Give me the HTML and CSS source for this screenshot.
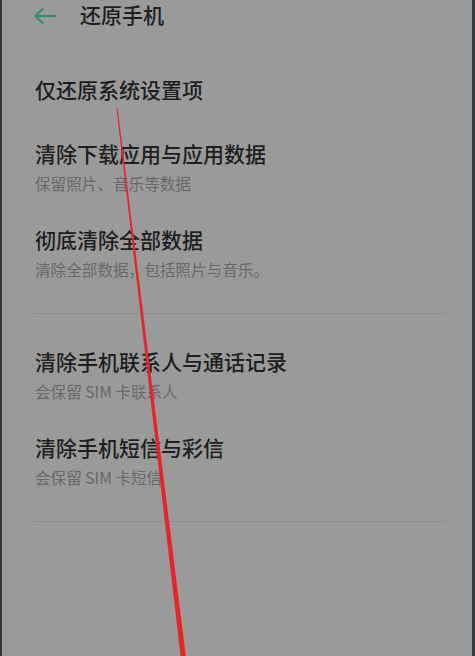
FILE: index.html
```html
<!DOCTYPE html>
<html lang="zh-CN">
<head>
<meta charset="utf-8">
<title>还原手机</title>
<link rel="stylesheet" href="styles.css">
</head>
<body>
<div class="screen">
  <header class="topbar">
    <svg class="back" width="24" height="18" viewBox="0 0 24 18" aria-hidden="true">
      <path d="M22 9H2.5M9.5 2L2.5 9l7 7" fill="none" stroke="#3f8c6c" stroke-width="2.2" stroke-linecap="round" stroke-linejoin="round"/>
    </svg>
    <h1 class="title">还原手机</h1>
  </header>

  <section class="group first-group">
    <div class="item single">
      <div class="item-title">仅还原系统设置项</div>
    </div>
    <div class="item">
      <div class="item-title">清除下载应用与应用数据</div>
      <div class="item-sub">保留照片、音乐等数据</div>
    </div>
    <div class="item">
      <div class="item-title">彻底清除全部数据</div>
      <div class="item-sub">清除全部数据，包括照片与音乐。</div>
    </div>
  </section>
  <div class="divider"></div>

  <section class="group">
    <div class="item">
      <div class="item-title">清除手机联系人与通话记录</div>
      <div class="item-sub">会保留 SIM 卡联系人</div>
    </div>
    <div class="item">
      <div class="item-title">清除手机短信与彩信</div>
      <div class="item-sub">会保留 SIM 卡短信</div>
    </div>
  </section>
  <div class="divider"></div>

  <svg class="annotation" width="475" height="656" viewBox="0 0 475 656" aria-hidden="true">
    <polygon points="116.4,108 117.6,108 185.8,656 180.6,656" fill="#e4262a"/>
  </svg>
</div>
</body>
</html>
```

FILE: styles.css
```css
html, body {
  margin: 0;
  padding: 0;
}

body {
  width: 475px;
  height: 656px;
  overflow: hidden;
  background: #9a9a9a;
  font-family: "Noto Sans CJK SC", "Noto Sans", "Liberation Sans", sans-serif;
}

.screen {
  position: relative;
  box-sizing: border-box;
  width: 475px;
  height: 656px;
  overflow: hidden;
  background: #9a9a9a;
  border-left: 2px solid #2c3a40;
  border-right: 3px solid #343a3e;
}

.topbar {
  display: flex;
  align-items: center;
  height: 32px;
  padding-left: 31px;
}

.back {
  display: block;
  flex: none;
}

.title {
  margin: 0 0 4px 23px;
  font-size: 21px;
  font-weight: 500;
  line-height: 28px;
  color: #1f1f1f;
}

.group {
  padding-left: 33px;
}

.first-group {
  margin-top: 30px;
}

.item {
  display: flex;
  flex-direction: column;
  padding: 13px 0 15px;
}

.item.single {
  padding-bottom: 23px;
}

.item-title {
  font-size: 21px;
  font-weight: 500;
  line-height: 28px;
  color: #1e1e1e;
}

.item-sub {
  margin-top: 2px;
  font-size: 15.6px;
  line-height: 28px;
  color: #686868;
}

.divider {
  height: 1px;
  margin: 15px 27px 20px 31px;
  background: #8d8d8d;
}

.annotation {
  position: absolute;
  left: -2px;
  top: 0;
  pointer-events: none;
}
```
